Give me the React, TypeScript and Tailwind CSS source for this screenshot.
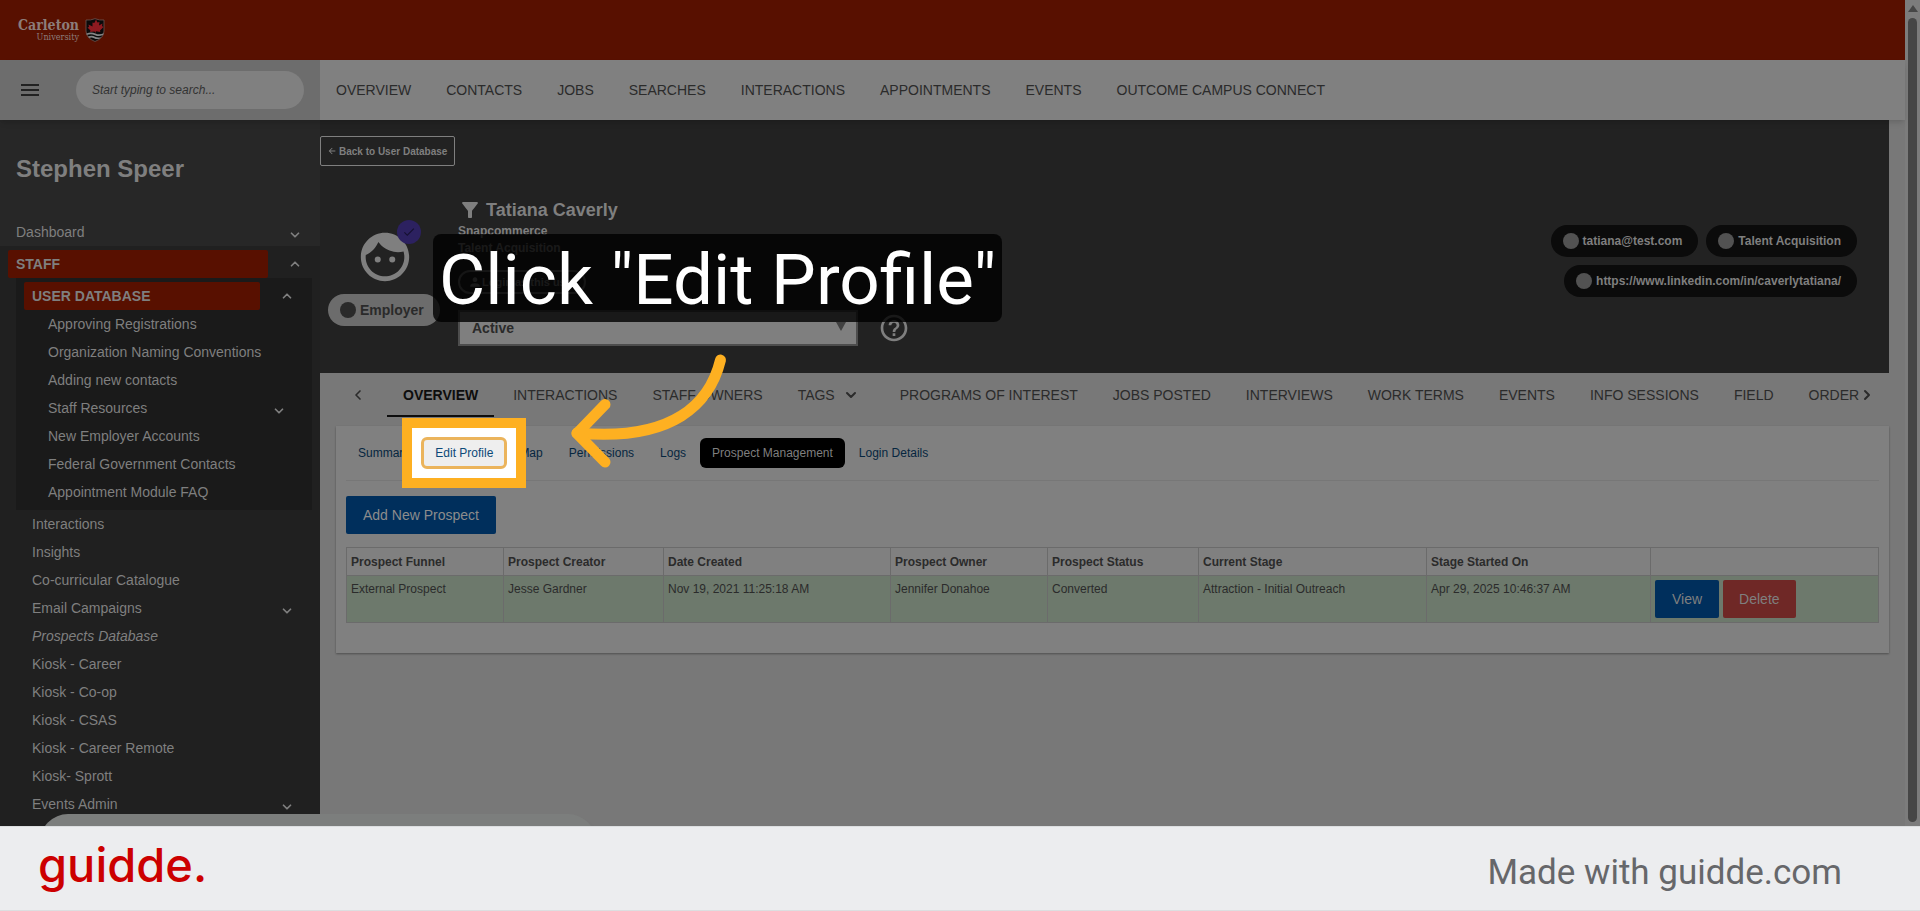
import React from 'react';
import { ChevronDown, ChevronLeft, ChevronRight, ChevronUp } from 'lucide-react';
import { MdArrowBack, MdCheck, MdFace, MdFilterAlt, MdHelpOutline, MdMenu, MdPerson } from 'react-icons/md';

interface NavEntry {
  label: string;
  expandable?: boolean;
  italic?: boolean;
}

const topLinks = [
  'OVERVIEW',
  'CONTACTS',
  'JOBS',
  'SEARCHES',
  'INTERACTIONS',
  'APPOINTMENTS',
  'EVENTS',
  'OUTCOME CAMPUS CONNECT',
];

const databaseLinks: NavEntry[] = [
  { label: 'Approving Registrations' },
  { label: 'Organization Naming Conventions' },
  { label: 'Adding new contacts' },
  { label: 'Staff Resources', expandable: true },
  { label: 'New Employer Accounts' },
  { label: 'Federal Government Contacts' },
  { label: 'Appointment Module FAQ' },
];

const staffLinks: NavEntry[] = [
  { label: 'Interactions' },
  { label: 'Insights' },
  { label: 'Co-curricular Catalogue' },
  { label: 'Email Campaigns', expandable: true },
  { label: 'Prospects Database', italic: true },
  { label: 'Kiosk - Career' },
  { label: 'Kiosk - Co-op' },
  { label: 'Kiosk - CSAS' },
  { label: 'Kiosk - Career Remote' },
  { label: 'Kiosk- Sprott' },
  { label: 'Events Admin', expandable: true },
];

const tabs: NavEntry[] = [
  { label: 'INTERACTIONS' },
  { label: 'STAFF OWNERS' },
  { label: 'TAGS', expandable: true },
  { label: 'PROGRAMS OF INTEREST' },
  { label: 'JOBS POSTED' },
  { label: 'INTERVIEWS' },
  { label: 'WORK TERMS' },
  { label: 'EVENTS' },
  { label: 'INFO SESSIONS' },
  { label: 'FIELD' },
];

const columns = [
  { title: 'Prospect Funnel', value: 'External Prospect', width: 'w-[157px]' },
  { title: 'Prospect Creator', value: 'Jesse Gardner', width: 'w-[160px]' },
  { title: 'Date Created', value: 'Nov 19, 2021 11:25:18 AM', width: 'w-[227px]' },
  { title: 'Prospect Owner', value: 'Jennifer Donahoe', width: 'w-[157px]' },
  { title: 'Prospect Status', value: 'Converted', width: 'w-[151px]' },
  { title: 'Current Stage', value: 'Attraction - Initial Outreach', width: 'w-[228px]' },
  { title: 'Stage Started On', value: 'Apr 29, 2025 10:46:37 AM', width: 'w-[224px]' },
];

const Shield = () => (
  <svg width="20" height="24" viewBox="0 0 20 24" aria-hidden="true">
    <path d="M1 2 Q5.500 2.500 10 .700 Q14.500 2.500 19 2 V13 Q19 20 10 23.500 Q1 20 1 13 Z" fill="#0a0a0a" stroke="#6d5550" strokeWidth=".8" />
    <path d="M11 1.500 L12.500 4.500 L14.500 4 L14 7.500 L17.500 5.500 L17 8 L18.500 9 L15 12.500 L15.300 14 L11 13.300 L10.500 15 L9.500 13.500 L5 14 L5.500 12.500 L2.500 9.500 L4 9 L3.500 6.500 L7.500 8.500 L7.500 4.500 L9.300 5 Z" fill="#8d1a20" />
    <path d="M1.500 15.500 Q6 13.500 10.500 15.500 Q14.500 17.300 18.700 15.300 L18 17 Q14 19 10 17.200 Q6 15.500 1.800 17 Z" fill="#858585" />
    <path d="M3 18.500 Q7 17 10 18.700 Q13 20.200 16.500 19 L14.500 20.800 Q11.500 21.500 9 20.200 Q6.500 19 4 20 Z" fill="#858585" />
  </svg>
);

const SidebarItem = ({ label, expandable, italic, className }: NavEntry & { className: string }) => (
  <li>
    <a href="#" className={`flex h-7 items-center justify-between ${className} ${italic ? 'italic' : ''}`}>
      <span>{label}</span>
      {expandable && <ChevronDown size={14} strokeWidth={3} className="mt-1.5" />}
    </a>
  </li>
);

const Sidebar = () => (
  <aside className="w-80 shrink-0 overflow-hidden bg-[#202020] text-sm text-[#7f7f7f]">
    <div className="bg-[#272727] pt-[33px]">
      <h1 className="px-4 text-2xl leading-8 font-bold">Stephen Speer</h1>
      <a href="#" className="mt-[33px] flex h-7 items-center justify-between pr-[18px] pl-4">
        <span>Dashboard</span>
        <ChevronDown size={14} strokeWidth={3} className="mt-1.5" />
      </a>
    </div>
    <nav className="pt-1">
      <div className="flex h-7 items-center justify-between pr-[18px] pl-2">
        <a href="#" className="h-7 w-[260px] rounded-xs bg-[#581000] px-2 leading-7 font-bold">STAFF</a>
        <ChevronUp size={14} strokeWidth={3} />
      </div>
      <div className="mr-2 ml-4 bg-[#1a1a1a] py-1">
        <div className="flex h-7 items-center justify-between pr-[18px] pl-2">
          <a href="#" className="h-7 w-[236px] rounded-xs bg-[#581000] px-2 leading-7 font-bold">USER DATABASE</a>
          <ChevronUp size={14} strokeWidth={3} />
        </div>
        <ul>
          {databaseLinks.map((link) => (
            <SidebarItem key={link.label} {...link} className="pr-[26px] pl-8" />
          ))}
        </ul>
      </div>
      <ul>
        {staffLinks.map((link) => (
          <SidebarItem key={link.label} {...link} className="pr-[26px] pl-8" />
        ))}
      </ul>
    </nav>
  </aside>
);

const Chip = ({ children }: { children: React.ReactNode }) => (
  <span className="flex h-8 items-center gap-1 rounded-full bg-[#0b0b0b] pr-4 pl-3 text-xs font-bold text-[#7f7f7f]">
    <span className="size-4 rounded-full bg-[#525252]" />
    {children}
  </span>
);

const ProfileHeader = () => (
  <section className="mr-4 bg-[#222222] pt-4 pb-[27px] text-[#7f7f7f]">
    <button className="flex h-[30px] items-center gap-0.5 rounded-xs border border-[#7f7f7f] pr-[7px] pl-1.5 text-[10px] font-bold">
      <MdArrowBack size={10} />
      <span>Back to User Database</span>
    </button>
    <div className="mt-8 flex">
      <div className="flex w-[138px] shrink-0 flex-col items-start pt-[30px] pl-2">
        <div className="relative ml-7">
          <MdFace size={58} />
          <span className="absolute -top-2 left-[41px] flex size-6 items-center justify-center rounded-full bg-[#2c2160] text-[#151030]">
            <MdCheck size={14} />
          </span>
        </div>
        <span className="mt-2 flex h-8 items-center gap-1 rounded-full bg-[#6c6c6c] pr-4 pl-3 text-sm font-bold text-[#2a2a2a]">
          <span className="size-4 rounded-full bg-[#2a2a2a]" />
          Employer
        </span>
      </div>
      <div>
        <h2 className="flex h-[25px] items-start gap-1 text-lg leading-6 font-bold">
          <MdFilterAlt size={24} />
          Tatiana Caverly
        </h2>
        <p className="text-xs leading-4 font-bold">Snapcommerce</p>
        <p className="text-xs leading-[18px] font-bold">Talent Acquisition</p>
        <button className="mt-[13px] flex h-6 items-center rounded-full border-2 border-[#6c6c6c] px-2 text-[11px] font-bold">
          <MdPerson size={14} />
          <span>Login as this user</span>
        </button>
        <div className="mt-4 flex items-center gap-5">
          <div className="relative">
            <label htmlFor="status" className="sr-only">Status</label>
            <select
              id="status"
              className="h-9 w-[400px] appearance-none border-2 border-[#4d4d4d] bg-[#7f7f7f] px-3 text-sm leading-5 font-bold text-[#2a2a2a]"
            >
              <option>Active</option>
            </select>
            <span className="pointer-events-none absolute top-3 right-3 border-x-[5px] border-t-[9px] border-x-transparent border-t-[#404040]" />
          </div>
          <button aria-label="Help">
            <MdHelpOutline size={32} />
          </button>
        </div>
      </div>
      <div className="ml-auto flex flex-col items-end gap-2 pt-[27px] pr-8">
        <div className="flex gap-2">
          <Chip>tatiana@test.com</Chip>
          <Chip>Talent Acquisition</Chip>
        </div>
        <Chip>https://www.linkedin.com/in/caverlytatiana/</Chip>
      </div>
    </div>
  </section>
);

const Tabs = () => (
  <nav className="mr-4 flex h-11 items-stretch overflow-hidden pr-4 pl-[30px] text-sm text-[#2b2b2b]">
    <button aria-label="Scroll left" className="mr-[21px] w-4">
      <ChevronLeft size={16} strokeWidth={2.5} />
    </button>
    <div className="flex items-stretch gap-[3px] whitespace-nowrap">
      <a href="#" className="flex items-center border-b-2 border-[#0d0d0d] px-4 pt-0.5 font-bold text-[#0d0d0d]">
        OVERVIEW
      </a>
      {tabs.map(({ label, expandable }) => (
        <a href="#" key={label} className="flex items-center gap-2 px-4">
          {label}
          {expandable && <ChevronDown size={16} strokeWidth={3} className="mr-1.5" />}
        </a>
      ))}
      <a href="#" className="flex items-center pl-4">ORDER</a>
    </div>
    <button aria-label="Scroll right" className="w-4">
      <ChevronRight size={16} strokeWidth={3} />
    </button>
  </nav>
);

// bright cut-out around the control that the step is about
const HighlightedAction = () => (
  <span className="relative">
    <span className="absolute -inset-x-[19px] -inset-y-[19px] border-10 border-[#feb021] bg-white" />
    <a
      href="#"
      className="relative flex h-8 items-center rounded-md border-3 border-[#ebb45c] bg-[#eeeeee] px-[11px] text-[#0c4a78]"
    >
      Edit Profile
    </a>
  </span>
);

const SubNav = () => (
  <nav className="flex items-center border-b border-[#777777] pt-1 pb-[11px] text-xs whitespace-nowrap text-[#06263f]">
    <a href="#" className="px-3">Summary</a>
    <HighlightedAction />
    <div className="flex items-center gap-0.5">
      <a href="#" className="px-3">Map</a>
      <a href="#" className="px-3">Permissions</a>
      <a href="#" className="px-3">Logs</a>
      <a href="#" className="rounded-md bg-black px-3 leading-[30px] text-[#7f7f7f]">Prospect Management</a>
      <a href="#" className="px-3">Login Details</a>
    </div>
  </nav>
);

const ProspectTable = () => (
  <table className="mt-[13px] w-full table-fixed border-collapse text-left text-xs text-[#2b2b2b]">
    <thead>
      <tr className="h-7">
        {columns.map(({ title, width }) => (
          <th key={title} className={`border border-[#6b6b6b] px-1 font-bold ${width}`}>{title}</th>
        ))}
        <th className="border border-[#6b6b6b]" aria-label="Actions" />
      </tr>
    </thead>
    <tbody>
      <tr className="bg-[#6d796c] align-top">
        {columns.map(({ title, value }) => (
          <td key={title} className="border border-[#6b6b6b] px-1 py-[5px]">{value}</td>
        ))}
        <td className="border border-[#6b6b6b] p-1">
          <div className="flex gap-1 text-sm text-[#7f7f7f]">
            <button className="h-[38px] rounded-xs bg-[#002f5c] px-[17px]">View</button>
            <button className="h-[38px] rounded-xs bg-[#6f2826] px-4">Delete</button>
          </div>
        </td>
      </tr>
    </tbody>
  </table>
);

const ScrollBar = () => (
  <div className="flex w-[15px] shrink-0 flex-col items-center gap-1.5 bg-[#7c7c7c] pt-[5px] pb-1">
    <span className="border-x-[5px] border-b-[7px] border-x-transparent border-b-[#464646]" />
    <span className="w-[9px] flex-1 rounded-full bg-[#464646]" />
  </div>
);

const StepCallout = () => (
  <>
    <div className="absolute top-[234px] left-[433px] rounded-lg bg-black/80 px-1.5 pt-1 font-['Roboto',sans-serif] text-[71px] leading-[84px] whitespace-nowrap text-white">
      Click "Edit Profile"
    </div>
    <svg
      className="absolute top-[350px] left-[566px]"
      width="170"
      height="124"
      viewBox="0 0 170 124"
      fill="none"
      stroke="#feb021"
      strokeWidth="11"
      strokeLinecap="round"
      strokeLinejoin="round"
      aria-hidden="true"
    >
      <path d="M154.500 10 C144 53 108 92 11 83" />
      <path d="M39 54.500 L11 83.500 L39 112" />
    </svg>
  </>
);

const App: React.FC = () => {
  return (
    <div className="flex h-screen flex-col overflow-hidden font-['Liberation_Sans',Arial,sans-serif]">
      <div className="relative flex min-h-0 flex-1 overflow-hidden bg-[#787878]">
        <div className="flex min-w-0 flex-1 flex-col">
          <header className="flex h-15 shrink-0 items-center gap-1.5 bg-[#581000] pl-[18px]">
            <div className="flex flex-col items-end font-['DejaVu_Serif_Condensed','DejaVu_Serif',serif] text-[#8c7d7a]">
              <span className="text-[14px] leading-[14px] font-bold">Carleton</span>
              <span className="text-[9px] leading-[10px]">University</span>
            </div>
            <Shield />
          </header>

          <div className="z-10 flex h-15 shrink-0 bg-[#808080] shadow-md">
            <div className="flex w-80 shrink-0 items-center bg-[#6d6d6d] pr-4 pl-[18px] text-[#222222]">
              <button aria-label="Menu">
                <MdMenu size={24} />
              </button>
              <input
                type="text"
                aria-label="Search"
                placeholder="Start typing to search..."
                className="ml-auto h-[38px] w-[228px] rounded-full bg-[#808080] px-4 text-xs italic placeholder:text-[#333333]"
              />
            </div>
            <nav className="flex items-center gap-[35px] px-4 text-sm whitespace-nowrap text-[#2b2b2b]">
              {topLinks.map((link) => (
                <a href="#" key={link}>{link}</a>
              ))}
            </nav>
          </div>

          <div className="flex min-h-0 flex-1">
            <Sidebar />
            <main className="min-w-0 flex-1">
              <ProfileHeader />
              <Tabs />
              <section className="mt-[9px] mr-4 ml-4 bg-[#808080] px-2.5 pt-[7px] pb-[30px] shadow-[0_1px_2px_rgba(0,0,0,0.35)]">
                <SubNav />
                <button className="mt-[15px] h-[38px] rounded-xs bg-[#002f5c] px-[17px] text-sm text-[#8c8c8c]">
                  Add New Prospect
                </button>
                <ProspectTable />
              </section>
            </main>
          </div>
        </div>
        <ScrollBar />

        <div className="absolute -bottom-11 left-10 h-14 w-[556px] rounded-full bg-[#7c7e7d] shadow-lg" />
        <StepCallout />
      </div>

      <footer className="flex h-[85px] shrink-0 items-center justify-between border-y border-[#dcdee0] bg-[#ecedef] pr-[78px] pl-[38px]">
        <span className="pb-2 font-['Inter',sans-serif] text-[47px] leading-[56px] font-medium text-[#cc0000]">guidde.</span>
        <span className="pt-2 font-['Roboto',sans-serif] text-[35px] leading-[44px] text-[#66676a]">Made with guidde.com</span>
      </footer>
    </div>
  );
};

export default App;
